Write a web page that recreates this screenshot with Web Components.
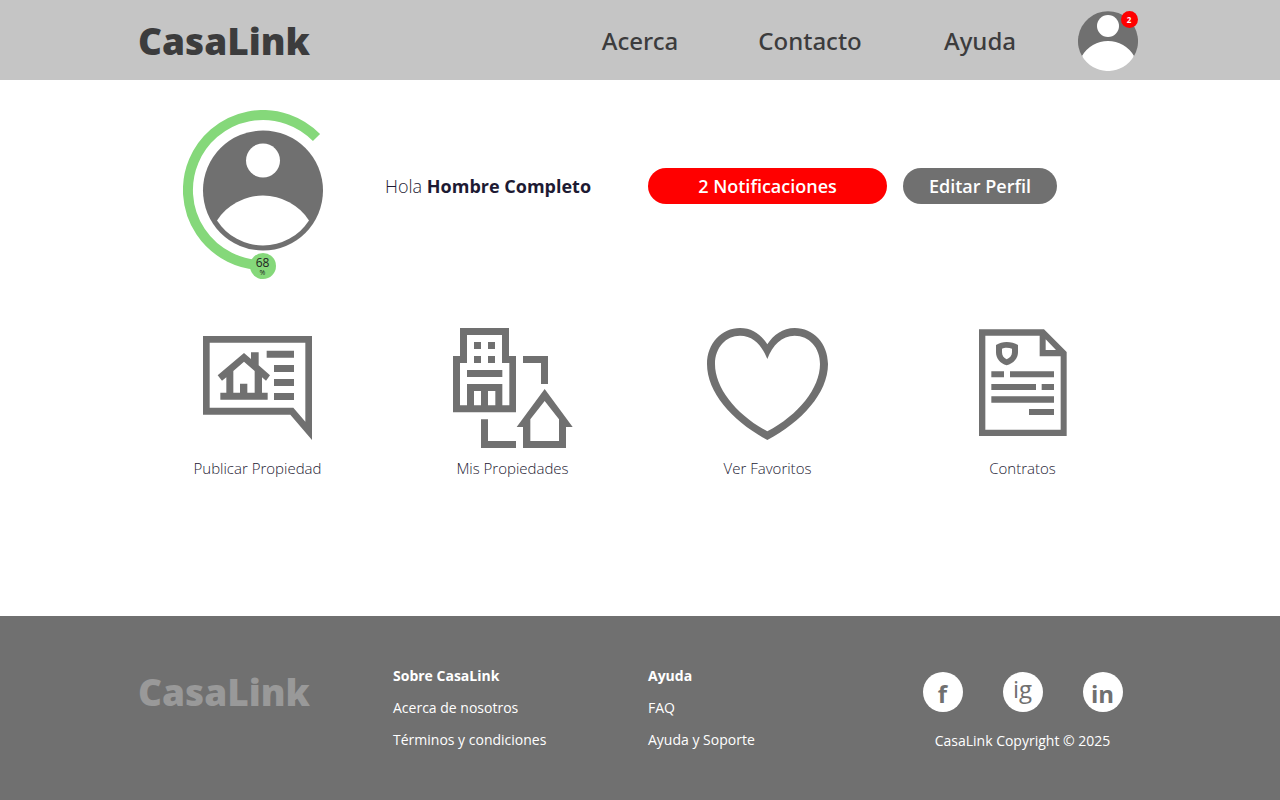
<!DOCTYPE html>
<html lang="es">
<head>
<meta charset="utf-8">
<meta name="viewport" content="width=device-width, initial-scale=1">
<title>CasaLink</title>
<style>
  body { margin: 0; background: #fff; color: #1d1a33; font-family: "Open Sans", "Noto Sans", sans-serif; }
</style>
</head>
<body>
<casa-page></casa-page>

<script>
const define = (name, html) => {
  const template = document.createElement('template');
  template.innerHTML = html;
  customElements.define(name, class extends HTMLElement {
    constructor() {
      super();
      this.attachShadow({ mode: 'open' }).append(template.content.cloneNode(true));
    }
  });
};

define('casa-logo', `
  <style>
    :host { display: block; font-size: 37px; line-height: 48px; font-weight: 800; }
    a { color: inherit; text-decoration: none; }
  </style>
  <a href="#"><slot></slot></a>`);

define('casa-user-button', `
  <style>
    :host { display: block; width: 60px; height: 60px; position: relative; }
    button { display: block; padding: 0; border: 0; background: none; cursor: pointer; }
    svg { display: block; }
    span { position: absolute; top: 0; right: 0; width: 17px; height: 17px; border-radius: 50%;
      background: #f00; color: #fff; font-size: 8px; line-height: 17px; font-weight: 700; text-align: center; }
  </style>
  <button type="button" aria-label="Mi cuenta">
    <svg width="60" height="60" viewBox="0 0 60 60" aria-hidden="true">
      <path d="M4.500 46A30 30 0 1 1 55.500 46Z" fill="#707070"/>
      <circle cx="30" cy="15" r="11" fill="#fff"/>
      <path d="M4 45A30 30 0 0 1 56 45A30 30 0 0 1 4 45Z" fill="#fff"/>
    </svg>
  </button>
  <span><slot></slot></span>`);

define('casa-header', `
  <style>
    :host { display: block; background: #c5c5c5; color: #3c3c3d; }
    .bar { display: grid; grid-template-columns: 5fr 2fr 2fr 2fr 1fr; align-items: center;
      max-width: 1020px; min-height: 80px; margin: 0 auto; }
    casa-logo { padding: 2px 8px 0; }
    nav { display: contents; }
    nav a { color: inherit; text-decoration: none; font-size: 24px; line-height: 32px; font-weight: 500; text-align: center;
      font-family: "Noto Sans", sans-serif; padding-top: 2px; }
    casa-user-button { justify-self: center; top: 1px; }
  </style>
  <header class="bar">
    <casa-logo>CasaLink</casa-logo>
    <nav><a href="#acerca">Acerca</a><a href="#contacto">Contacto</a><a href="#ayuda">Ayuda</a></nav>
    <casa-user-button>2</casa-user-button>
  </header>`);

define('casa-progress-avatar', `
  <style>
    :host { display: block; position: relative; width: 160px; height: 160px; }
    svg { display: block; }
    .badge { position: absolute; left: 67px; top: 143px; width: 26px; height: 26px; border-radius: 50%;
      background: #85d87a; color: #222; text-align: center; font-size: 12px; line-height: 16px; }
    .badge b { display: block; font-weight: 400; padding-top: 2px; }
    small { display: block; font-size: 7px; line-height: 4px; }
  </style>
  <svg width="160" height="160" viewBox="0 0 160 160" aria-hidden="true">
    <path d="M80 155A75 75 0 1 1 133.500 27.500" fill="none" stroke="#85d87a" stroke-width="10"/>
    <circle cx="80" cy="80.500" r="60" fill="#707070"/>
    <circle cx="80" cy="50.500" r="17" fill="#fff"/>
    <path d="M34 110.500A54.800 54.800 0 0 1 126 110.500A54.900 54.900 0 0 1 34 110.500Z" fill="#fff"/>
  </svg>
  <div class="badge"><b><slot></slot></b><small>%</small></div>`);

define('casa-pill', `
  <style>
    :host { display: block; }
    button { display: block; width: 100%; height: 36px; padding: 0; border: 0; border-radius: 18px;
      background: var(--pill, #707070); color: #fff; font: 600 18px/36px "Open Sans", "Noto Sans", sans-serif; cursor: pointer; }
  </style>
  <button type="button"><slot></slot></button>`);

define('casa-profile', `
  <style>
    :host { display: grid; grid-template-columns: 3fr 3fr 3fr 2fr 1fr; align-items: center; }
    casa-progress-avatar { justify-self: center; margin-left: 10px; }
    p { margin: 0; font-size: 18px; line-height: 24px; font-weight: 300; }
    strong { font-weight: 700; }
    p, casa-pill { margin-bottom: 8px; }
    casa-pill { margin-left: 8px; margin-right: 8px; }
    .alert { --pill: #f00; }
  </style>
  <casa-progress-avatar>68</casa-progress-avatar>
  <p>Hola <strong>Hombre Completo</strong></p>
  <casa-pill class="alert">2 Notificaciones</casa-pill>
  <casa-pill>Editar Perfil</casa-pill>`);

define('casa-action', `
  <style>
    :host { display: block; text-align: center; }
    a { display: flex; flex-direction: column; align-items: center; gap: 10px; color: inherit;
      text-decoration: none; font-size: 15px; line-height: 20px; font-weight: 300; }
    ::slotted(svg) { display: block; width: 121px; height: 120px; fill: #707070; fill-rule: evenodd; }
  </style>
  <a href="#"><slot name="icon"></slot><span><slot></slot></span></a>`);

define('casa-actions', `
  <style>
    :host { display: grid; grid-template-columns: repeat(4, 1fr); }
  </style>
  <casa-action>
    <svg slot="icon" viewBox="36 24 363 360" aria-hidden="true">
      <path d="M54 48H381V360L316 284H54ZM74 68V263H325L361 305V68Z"/>
      <path d="M98 166L177 99L198 117V97H221V136L255 166L243 182L231 172V218H248V239H106V218H124V172L111 182ZM145 153V218H165V191H187V218H209V153L177 125Z"/>
      <path d="M245 92h82v21h-82zM267 135h60v21h-60zM267 177h60v21h-60zM267 219h60v21h-60z"/>
    </svg>Publicar Propiedad</casa-action>
  <casa-action>
    <svg slot="icon" viewBox="36 24 363 360" aria-hidden="true">
      <path d="M60 24H207V108H228V277H39V108H60ZM81 45V129H60V256H81V192H187V256H208V129H186V45ZM102 213V256H123V213ZM144 213V256H166V213Z"/>
      <path d="M102 66h21v21h-21zM144 66h21v21h-21zM102 108h21v21h-21zM144 108h21v21h-21zM81 150h106v21H81z"/>
      <path d="M249 108H324V192H303V129H249ZM123 298H144V363H228V384H123Z"/>
      <path d="M314 207L398 321H378V384H249V321H230ZM314 243L271 298V363H357V298Z"/>
    </svg>Mis Propiedades</casa-action>
  <casa-action>
    <svg slot="icon" viewBox="51 24 363 360" aria-hidden="true">
      <path d="M232 73C215 45 187 24 150 24C95 24 51 70 51 132C51 220 130 305 232 360C335 305 414 220 414 132C414 70 370 24 314 24C278 24 250 45 232 73ZM232 117C215 75 190 47 150 47C108 47 75 82 75 132C75 205 140 285 232 334C325 285 390 205 390 132C390 82 357 47 314 47C275 47 248 75 232 117Z"/>
    </svg>Ver Favoritos</casa-action>
  <casa-action>
    <svg slot="icon" viewBox="6 24 363 360" aria-hidden="true">
      <path d="M57 28H252L320 96V348H57ZM76 47V329H302V109H239V47ZM257 58V90H288Z"/>
      <path d="M140 66C128 66 118 69 108 75V97C108 115 120 131 140 136C161 131 174 115 174 97V75C165 69 152 66 140 66ZM140 83C134 83 131 84 126 86V97C126 107 131 114 140 118C150 114 156 107 156 97V86C151 84 146 83 140 83Z"/>
      <path d="M94 154h38v18H94zM150 154h132v18H150zM94 192h134v18H94zM245 192h37v18h-37zM94 229h188v19H94zM207 267h75v18h-75z"/>
    </svg>Contratos</casa-action>`);

define('casa-link-list', `
  <style>
    :host { display: flex; flex-direction: column; align-items: flex-start; gap: 12px; padding: 0 8px;
      font-size: 14px; line-height: 20px; }
    h2 { margin: 0; font: inherit; font-weight: 700; }
    ::slotted(a) { color: inherit; text-decoration: none; }
  </style>
  <h2><slot name="title"></slot></h2>
  <slot></slot>`);

define('casa-social', `
  <style>
    :host { display: block; }
    a { display: block; width: 40px; height: 40px; border-radius: 50%; background: #fff; color: #707070;
      text-align: center; text-decoration: none; font-size: 24px; line-height: 44px; font-weight: 700; }
    :host([light]) a { font-weight: 400; line-height: 34px; }
  </style>
  <a href="#"><slot></slot></a>`);

define('casa-footer', `
  <style>
    :host { display: block; background: #707070; color: #fff; }
    footer { display: grid; grid-template-columns: repeat(4, 1fr); align-items: start;
      max-width: 1020px; margin: 0 auto; padding: 50px 0 49px; }
    casa-logo { padding: 2px 8px 0; color: #999; }
    .contact { display: flex; flex-direction: column; align-items: center; gap: 19px; padding-top: 6px; }
    .social { display: flex; gap: 40px; }
    p { margin: 0; font-size: 14px; line-height: 20px; }
  </style>
  <footer>
    <casa-logo>CasaLink</casa-logo>
    <casa-link-list>
      <span slot="title">Sobre CasaLink</span>
      <a href="#nosotros">Acerca de nosotros</a>
      <a href="#terminos">Términos y condiciones</a>
    </casa-link-list>
    <casa-link-list>
      <span slot="title">Ayuda</span>
      <a href="#faq">FAQ</a>
      <a href="#soporte">Ayuda y Soporte</a>
    </casa-link-list>
    <div class="contact">
      <div class="social">
        <casa-social>f</casa-social>
        <casa-social light>ig</casa-social>
        <casa-social>in</casa-social>
      </div>
      <p>CasaLink Copyright © 2025</p>
    </div>
  </footer>`);

define('casa-page', `
  <style>
    :host { display: flex; flex-direction: column; min-height: 100vh; }
    main { flex: 1; box-sizing: border-box; width: 100%; max-width: 1020px; margin: 0 auto; padding: 30px 0; }
    casa-actions { margin-top: 58px; }
  </style>
  <casa-header></casa-header>
  <main>
    <casa-profile></casa-profile>
    <casa-actions></casa-actions>
  </main>
  <casa-footer></casa-footer>`);
</script>
</body>
</html>
